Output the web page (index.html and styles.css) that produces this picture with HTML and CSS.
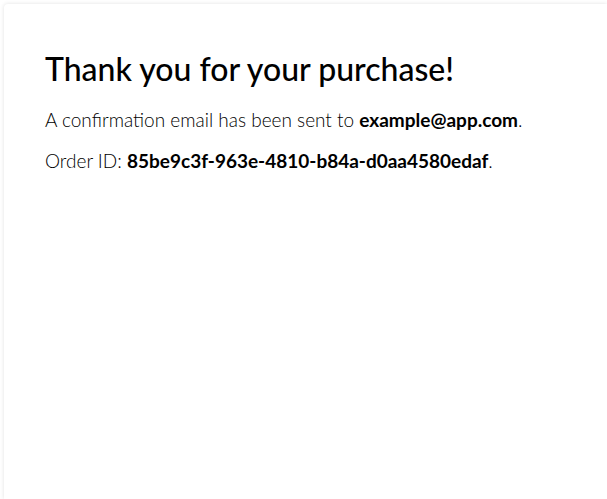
FILE: index.html
```html
<!DOCTYPE html>
<html>
<head>
<meta charset="utf-8">
<link rel="stylesheet" href="styles.css">
</head>
<body>
<div class="card">
  <h1 class="title">Thank you for your purchase!</h1>
  <p class="line">A confirmation email has been sent to <strong>example@app.com</strong>.</p>
  <p class="line">Order ID: <strong>85be9c3f-963e-4810-b84a-d0aa4580edaf</strong>.</p>
</div>
</body>
</html>
```
FILE: styles.css
```css
html, body {
  margin: 0;
  padding: 0;
  background: #ffffff;
}
body {
  display: flex;
  padding: 4px 0 0 4px;
  height: 100vh;
  box-sizing: border-box;
  overflow: hidden;
  font-family: "Lato", "Open Sans", sans-serif;
  color: #000000;
}
.card {
  flex: 1;
  background: #ffffff;
  border-radius: 4px 0 0 0;
  box-shadow: 0 0 4px rgba(0, 0, 0, 0.12);
  padding: 46px 40px 0 41px;
}
.title {
  margin: 0 0 19px 0;
  font-size: 32px;
  font-weight: 500;
  line-height: 1.2;
  color: #000;
}
.line {
  margin: 0 0 15px 0;
  font-size: 19px;
  line-height: 26px;
  font-weight: 300;
}
.line strong {
  font-weight: 700;
}
```
